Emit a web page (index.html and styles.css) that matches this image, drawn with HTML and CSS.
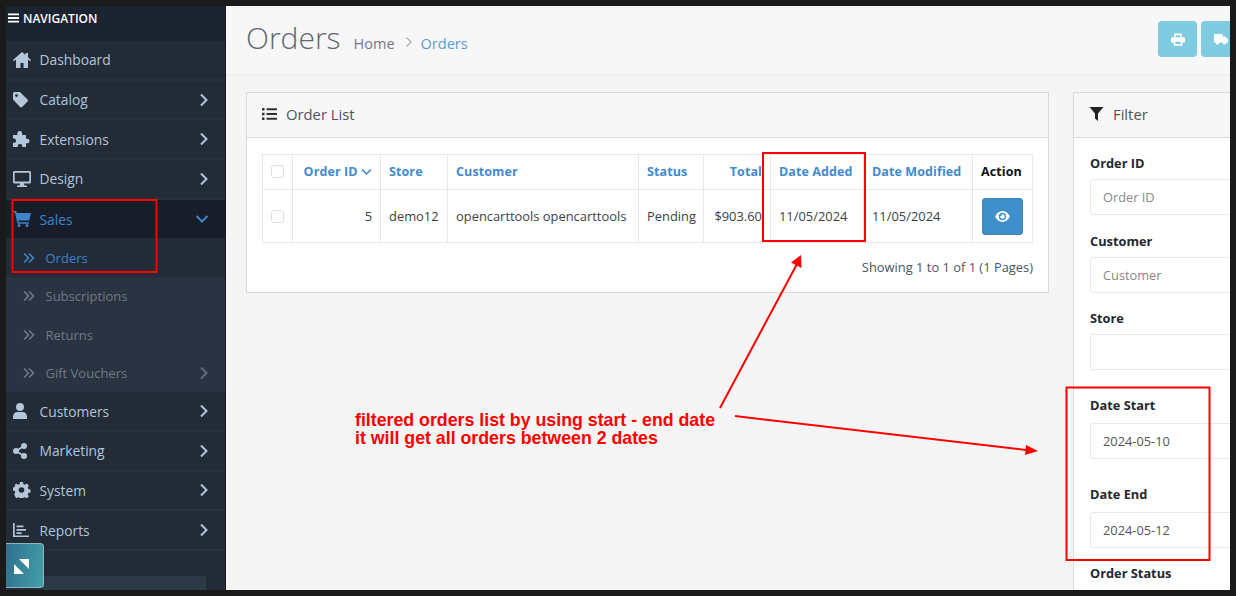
FILE: index.html
```html
<!DOCTYPE html>
<html>
<head>
  <title>Orders</title>
  <link rel="stylesheet" href="styles.css">
</head>
<body>
  <svg width="0" height="0" class="defs">
    <symbol id="chev-right" viewBox="0 0 10 14"><path d="M2 1.500 7.500 7 2 12.500" fill="none" stroke="currentColor" stroke-width="2"/></symbol>
    <symbol id="chev-down" viewBox="0 0 14 10"><path d="M1.500 2 7 7.500 12.500 2" fill="none" stroke="currentColor" stroke-width="2"/></symbol>
    <symbol id="chev-double" viewBox="0 0 12 12"><path d="M1 1.500 5.500 6 1 10.500M6 1.500 10.500 6 6 10.500" fill="none" stroke="currentColor" stroke-width="1.600"/></symbol>
  </svg>

  <div class="window">
    <nav class="sidebar">
      <div class="nav-title">
        <svg class="burger" viewBox="0 0 12 10"><path d="M0 0h12v2H0zM0 4h12v2H0zM0 8h12v2H0z" fill="currentColor"/></svg>
        <span>NAVIGATION</span>
      </div>
      <ul class="menu">
        <li class="item">
          <svg class="icon" viewBox="0 0 18 16"><path d="M9 0 0 8l1 1.200L3 7.600V16h4.500v-5h3v5H15V7.600l2 1.600L18 8l-3-2.700V1h-2.500v2.100z" fill="currentColor"/></svg>
          <span>Dashboard</span>
        </li>
        <li class="item">
          <svg class="icon" viewBox="0 0 18 16"><path d="M0 1.500C0 .6.600 0 1.500 0H7l7.500 7.500c.6.600.6 1.500 0 2.100l-5.400 5.400c-.6.600-1.500.6-2.100 0L0 7.500zM3.500 2.200a1.400 1.400 0 1 0 0 2.800 1.400 1.400 0 0 0 0-2.800z" fill="currentColor" fill-rule="evenodd"/></svg>
          <span>Catalog</span>
          <svg class="arrow"><use href="#chev-right"/></svg>
        </li>
        <li class="item">
          <svg class="icon" viewBox="0 0 18 16"><path d="M0 4h4.500C4 2.500 4.500 0 6.800 0S9.600 2.500 9 4h4v4c1.500-.7 3.500-.2 3.500 2s-2 2.700-3.500 2v4H9c.6-1.500.2-3-2-3s-2.700 1.500-2 3H0v-4.500c1.500.6 3 .1 3-1.800S1.500 7 0 7.800z" fill="currentColor"/></svg>
          <span>Extensions</span>
          <svg class="arrow"><use href="#chev-right"/></svg>
        </li>
        <li class="item">
          <svg class="icon" viewBox="0 0 18 16"><path d="M1.500 0h15C17.400 0 18 .6 18 1.500v9.500c0 .9-.6 1.500-1.500 1.500H11l.5 2H14v1.500H4V14.500h2.500l.5-2H1.500C.6 12.500 0 11.900 0 11V1.500C0 .6.600 0 1.500 0zM1.700 1.700v8.800h14.600V1.700z" fill="currentColor" fill-rule="evenodd"/></svg>
          <span>Design</span>
          <svg class="arrow"><use href="#chev-right"/></svg>
        </li>
        <li class="item active">
          <svg class="icon" viewBox="0 0 18 16"><path d="M0 0h3.200l.5 2H18l-1.800 7.500H5.400l.4 1.700h10v1.500H4.500L2 1.500H0z" fill="currentColor"/><circle cx="6" cy="14.500" r="1.500" fill="currentColor"/><circle cx="14" cy="14.500" r="1.500" fill="currentColor"/></svg>
          <span>Sales</span>
          <svg class="arrow-down"><use href="#chev-down"/></svg>
        </li>
        <li class="sub current">
          <svg class="double"><use href="#chev-double"/></svg>
          <span>Orders</span>
        </li>
        <li class="sub">
          <svg class="double"><use href="#chev-double"/></svg>
          <span>Subscriptions</span>
        </li>
        <li class="sub">
          <svg class="double"><use href="#chev-double"/></svg>
          <span>Returns</span>
        </li>
        <li class="sub">
          <svg class="double"><use href="#chev-double"/></svg>
          <span>Gift Vouchers</span>
          <svg class="arrow thin"><use href="#chev-right"/></svg>
        </li>
        <li class="item">
          <svg class="icon" viewBox="0 0 18 16"><circle cx="7" cy="4" r="4" fill="currentColor"/><path d="M0 16v-2.500C0 11 2 9 4.500 9h5C12 9 14 11 14 13.500V16z" fill="currentColor"/></svg>
          <span>Customers</span>
          <svg class="arrow"><use href="#chev-right"/></svg>
        </li>
        <li class="item">
          <svg class="icon" viewBox="0 0 18 16"><circle cx="3" cy="8" r="3" fill="currentColor"/><circle cx="11" cy="3" r="3" fill="currentColor"/><circle cx="11" cy="13" r="3" fill="currentColor"/><path d="M3 8l8-5M3 8l8 5" stroke="currentColor" stroke-width="1.600"/></svg>
          <span>Marketing</span>
          <svg class="arrow"><use href="#chev-right"/></svg>
        </li>
        <li class="item">
          <svg class="icon" viewBox="0 0 18 16"><path d="M6.500 0h3l.4 2.200 1.500.6L13.300 1.600l2.100 2.100-1.200 1.900.6 1.500 2.200.4v3l-2.200.4-.6 1.500 1.200 1.900-2.100 2.100-1.900-1.200-1.500.6-.4 1.700h-3l-.4-1.700-1.500-.6-1.900 1.200L.6 12.300l1.200-1.900-.6-1.500L-1 8.500v-3l2.200-.4.6-1.500L.6 3.700l2.100-2.100 1.900 1.200 1.500-.6zM8 5.200a2.800 2.800 0 1 0 0 5.600 2.800 2.800 0 0 0 0-5.600z" fill="currentColor" fill-rule="evenodd" transform="translate(.5 0)"/></svg>
          <span>System</span>
          <svg class="arrow"><use href="#chev-right"/></svg>
        </li>
        <li class="item">
          <svg class="icon" viewBox="0 0 18 16"><path d="M0 1h1.700v12.500H16V15H0zM3.500 3.500h7v1.700h-7zM3.500 7h9.500v1.700H3.500zM3.500 10.300h5V12h-5z" fill="currentColor"/></svg>
          <span>Reports</span>
          <svg class="arrow"><use href="#chev-right"/></svg>
        </li>
      </ul>
      <div class="side-bar-track"></div>
    </nav>

    <main class="content">
      <header class="page-header">
        <div class="title-row">
          <h1>Orders</h1>
          <span class="crumb">Home</span>
          <svg class="crumb-sep" viewBox="0 0 8 12"><path d="M1.500 1.500 6 6l-4.500 4.500" fill="none" stroke="currentColor" stroke-width="1.200"/></svg>
          <span class="crumb link">Orders</span>
        </div>
        <div class="actions">
          <button class="tool-btn">
            <svg viewBox="0 0 16 14"><path d="M3.500 0h9v4h-2V2h-5v2h-2zM1.500 4.500h13c.8 0 1.500.7 1.500 1.500v4.500h-3V14H3v-3.500H0V6c0-.8.700-1.500 1.500-1.500zM5 9.500V12h6V9.500z" fill="currentColor" fill-rule="evenodd"/></svg>
          </button>
          <button class="tool-btn">
            <svg viewBox="0 0 18 14"><path d="M0 1.500C0 .7.700 0 1.500 0H11v3h3.500L18 7v4h-2a2.500 2.500 0 0 1-5 0H7a2.500 2.500 0 0 1-5 0H0z" fill="currentColor"/></svg>
          </button>
        </div>
      </header>

      <div class="columns">
        <section class="panel">
          <div class="panel-head">
            <svg class="head-icon" viewBox="0 0 15 12"><path d="M0 0h2.500v2.500H0zM0 4.750h2.500v2.500H0zM0 9.500h2.500V12H0zM4.500 .3H15v1.900H4.500zM4.500 5.050H15v1.900H4.500zM4.500 9.800H15v1.900H4.500z" fill="currentColor"/></svg>
            <span>Order List</span>
          </div>
          <div class="panel-body">
            <table class="orders">
              <thead>
                <tr>
                  <th class="c-check"><span class="check"></span></th>
                  <th class="c-id num">Order ID <svg class="sort"><use href="#chev-down"/></svg></th>
                  <th class="c-store">Store</th>
                  <th class="c-cust">Customer</th>
                  <th class="c-status">Status</th>
                  <th class="c-total num">Total</th>
                  <th class="c-added">Date Added</th>
                  <th class="c-mod">Date Modified</th>
                  <th class="c-action plain">Action</th>
                </tr>
              </thead>
              <tbody>
                <tr>
                  <td><span class="check"></span></td>
                  <td class="num">5</td>
                  <td>demo12</td>
                  <td>opencarttools opencarttools</td>
                  <td>Pending</td>
                  <td class="num">$903.60</td>
                  <td>11/05/2024</td>
                  <td>11/05/2024</td>
                  <td class="cell-action">
                    <button class="view-btn">
                      <svg viewBox="0 0 16 12"><path d="M8 0c3.500 0 6.500 2.400 8 6-1.500 3.600-4.500 6-8 6s-6.500-2.400-8-6c1.500-3.600 4.500-6 8-6zM8 2a4 4 0 1 0 0 8 4 4 0 0 0 0-8zm0 1.500a2.500 2.500 0 1 1-2.400 1.800A1.300 1.300 0 0 0 7.200 3.600c.2 0 .5-.1.800-.1z" fill="currentColor" fill-rule="evenodd"/></svg>
                    </button>
                  </td>
                </tr>
              </tbody>
            </table>
            <p class="result-count">Showing 1 to 1 of 1 (1 Pages)</p>
          </div>
        </section>

        <section class="panel filter">
          <div class="panel-head">
            <svg class="head-icon funnel" viewBox="0 0 14 14"><path d="M0 0h14L8.500 6.500V14l-3-2.500v-5z" fill="currentColor"/></svg>
            <span>Filter</span>
          </div>
          <div class="panel-body form">
            <label>Order ID</label>
            <div class="field"><span class="hint">Order ID</span></div>
            <label>Customer</label>
            <div class="field"><span class="hint">Customer</span></div>
            <label>Store</label>
            <div class="field"></div>
            <label class="wide">Date Start</label>
            <div class="field"><span>2024-05-10</span></div>
            <label class="wide">Date End</label>
            <div class="field"><span>2024-05-12</span></div>
            <label>Order Status</label>
          </div>
        </section>
      </div>
    </main>
  </div>

  <!-- annotations drawn on top of the screenshot -->
  <div class="expand">
    <svg viewBox="0 0 15 15"><path d="M0 5 10 15H0zM5 0h10v10z" fill="#fff"/></svg>
  </div>
  <p class="note">filtered orders list by using start - end date<br>it will get all orders between 2 dates</p>
  <svg class="marks" viewBox="0 0 1236 596">
    <rect x="12.500" y="200" width="144" height="72" />
    <rect x="763" y="153" width="102" height="88" />
    <rect x="1066.500" y="387.500" width="143" height="172.500" />
    <path d="M720 408 797 264M735 416 1026 450" />
    <polygon points="801,255 801.500,268 791,262.500" />
    <polygon points="1038,451 1025,455 1026,445" />
  </svg>
</body>
</html>
```

FILE: styles.css
```css
html, body {
  margin: 0;
  height: 100%;
  overflow: hidden;
}
body {
  background-color: #1a1a1a;
  font-family: "Open Sans", Arial, sans-serif;
  font-size: 13px;
  color: #333;
  position: relative;
}
.defs {
  position: absolute;
}
.window {
  display: flex;
  width: 1224px;
  height: 584px;
  margin: 6px;
  overflow: hidden;
}

/* sidebar */
.sidebar {
  width: 219px;
  flex-shrink: 0;
  background-color: #222b36;
  display: flex;
  flex-direction: column;
}
.nav-title {
  height: 35px;
  box-sizing: border-box;
  padding: 7px 0 0 2px;
  background-color: #1b2331;
  color: #fff;
  font-size: 12px;
  font-weight: 600;
  line-height: 11px;
  display: flex;
  align-items: flex-start;
  gap: 4px;
}
.burger {
  width: 11px;
  height: 10px;
}
.menu {
  list-style: none;
  margin: 0;
  padding: 0;
}
.item, .sub {
  display: flex;
  align-items: center;
  box-sizing: border-box;
  position: relative;
}
.item {
  height: 39.700px;
  padding-left: 7px;
  font-size: 13.800px;
  color: #b3c6da;
  border-bottom: 2px solid #27313d;
}
.icon {
  width: 18px;
  height: 16px;
  margin-right: 8.500px;
  flex-shrink: 0;
}
.arrow, .arrow-down {
  position: absolute;
  right: 16px;
  width: 10px;
  height: 14px;
}
.arrow.thin {
  opacity: 0.8;
}
.arrow-down {
  right: 16px;
  width: 14px;
  height: 10px;
}
.item.active {
  background-color: #181e29;
  color: #3d85c9;
  border-bottom: 0;
  height: 38.500px;
}
.sub {
  padding-left: 17px;
  font-size: 13px;
  color: #6e7a88;
  background-color: #2a3342;
  height: 38.500px;
}
.sub span {
  margin-left: 0.500px;
}
.sub.current {
  background-color: #222b37;
  color: #3d85c9;
}
.double {
  width: 12px;
  height: 12px;
  margin-right: 10px;
}
.side-bar-track {
  height: 14px;
  width: 163px;
  margin: auto 0 0 37px;
  background-color: #2c3a47;
}

/* main area */
.content {
  flex: 1;
  min-width: 0;
  margin-left: 1px;
  background-color: #f5f5f5;
}
.page-header {
  height: 70px;
  box-sizing: border-box;
  padding: 14px 0 0 20px;
  margin-bottom: 16px;
  background-color: #f7f7f7;
  border-bottom: 2px solid #eeeeee;
  display: flex;
  justify-content: space-between;
}
.title-row {
  display: flex;
  align-items: baseline;
  height: 35px;
}
h1 {
  margin: 0 13px 0 0;
  font-size: 30px;
  font-weight: 300;
  line-height: 35px;
  color: #5e6670;
}
.crumb {
  font-size: 14.500px;
  color: #777;
}
.crumb.link {
  color: #5b9bd5;
}
.crumb-sep {
  width: 8px;
  height: 12px;
  margin: 0 8px 7px 10px;
  color: #aaa;
  align-self: flex-end;
}
.actions {
  display: flex;
  gap: 4px;
  margin: 1px -10px 0 0;
  flex-shrink: 0;
}
.tool-btn {
  width: 39px;
  height: 36px;
  padding: 0;
  border: 0;
  border-radius: 4px;
  background-color: #7fcbdf;
  color: #fff;
  display: flex;
  align-items: center;
  justify-content: center;
}
.tool-btn svg {
  width: 14px;
  height: 13px;
}
.columns {
  display: flex;
  gap: 24px;
  padding-left: 20px;
}
.panel {
  width: 803px;
  height: 201px;
  box-sizing: border-box;
  flex-shrink: 0;
  background-color: #fff;
  border: 1px solid #d9d9d9;
}
.panel-head {
  height: 45px;
  box-sizing: border-box;
  padding: 0 0 2px 15px;
  background-color: #f7f7f7;
  border-bottom: 1px solid #d9d9d9;
  display: flex;
  align-items: center;
  gap: 9px;
  font-size: 14.800px;
  color: #4c5560;
}
.head-icon {
  width: 15px;
  height: 12px;
  color: #333;
}
.head-icon.funnel {
  height: 14px;
  color: #222;
}
.panel-body {
  padding: 16px 15px;
}

/* table */
.orders {
  width: 770px;
  table-layout: fixed;
  border-collapse: collapse;
  font-size: 12.900px;
  color: #3a3f46;
}
.orders th, .orders td {
  border: 1px solid #e3e8ee;
  padding: 0 8px;
  box-sizing: border-box;
  text-align: left;
  white-space: nowrap;
}
.orders th {
  height: 35px;
  padding-bottom: 2px;
  font-size: 12.500px;
  color: #3f8ad0;
  font-weight: 700;
  letter-spacing: 0.100px;
}
.orders td {
  height: 53px;
}
.orders th.plain {
  color: #111;
}
.orders .num {
  text-align: right;
}
.c-check { width: 30px; }
.c-id { width: 88px; }
.c-store { width: 67px; }
.c-cust { width: 191px; }
.c-status { width: 65px; }
.c-total { width: 67px; }
.c-added { width: 93px; }
.c-mod { width: 109px; }
.c-action { width: 60px; }
.check {
  display: block;
  width: 11px;
  height: 11px;
  border: 1px solid #dcdfe4;
  border-radius: 3px;
  background-color: #fff;
}
.sort {
  width: 11px;
  height: 8px;
}
.orders .cell-action {
  padding: 0;
}
.view-btn {
  display: flex;
  align-items: center;
  justify-content: center;
  width: 41px;
  height: 37px;
  margin: 0 auto;
  padding: 0;
  border: 1px solid #3a82bd;
  border-radius: 3px;
  background-color: #3f8fcb;
  color: #fff;
}
.view-btn svg {
  width: 15px;
  height: 11px;
}
.result-count {
  margin: 16px 0 0;
  text-align: right;
  font-size: 12.900px;
  line-height: 17px;
  color: #4c5560;
}

/* filter */
.panel.filter {
  width: 260px;
  height: 520px;
}
.form {
  padding-top: 17px;
  padding-left: 16px;
}
.form label {
  display: block;
  font-size: 12.800px;
  font-weight: 700;
  line-height: 17px;
  margin-bottom: 7px;
  color: #23282f;
}
.field {
  height: 36px;
  box-sizing: border-box;
  width: 260px;
  padding-left: 12px;
  margin-bottom: 17.500px;
  border: 1px solid #e6e8ec;
  border-radius: 3px;
  background-color: #fff;
  font-size: 12.800px;
  color: #555;
  display: flex;
  align-items: center;
}
.hint {
  color: #888;
}
.form label.wide {
  margin-top: 27px;
  margin-bottom: 9px;
}
.form .wide + .field {
  margin-bottom: 16.500px;
}

/* annotations */
.expand {
  position: absolute;
  left: 6px;
  top: 543px;
  width: 37.500px;
  height: 45px;
  box-sizing: border-box;
  border: 1px solid #8fb4c0;
  border-left: 0;
  border-radius: 0 4px 4px 0;
  background: linear-gradient(100deg, #2f6f8f, #43a0a8);
}
.expand svg {
  position: absolute;
  left: 8px;
  top: 15px;
  width: 15px;
  height: 15px;
}
.note {
  position: absolute;
  left: 355px;
  top: 410.500px;
  margin: 0;
  font-family: "Liberation Sans", Arial, sans-serif;
  font-size: 17.750px;
  font-weight: 700;
  line-height: 18px;
  color: #f00;
  white-space: nowrap;
}
.marks {
  position: absolute;
  left: 0;
  top: 0;
  width: 1236px;
  height: 596px;
  pointer-events: none;
}
.marks rect, .marks path {
  fill: none;
  stroke: #f00;
  stroke-width: 2;
}
.marks polygon {
  fill: #f00;
}
```
